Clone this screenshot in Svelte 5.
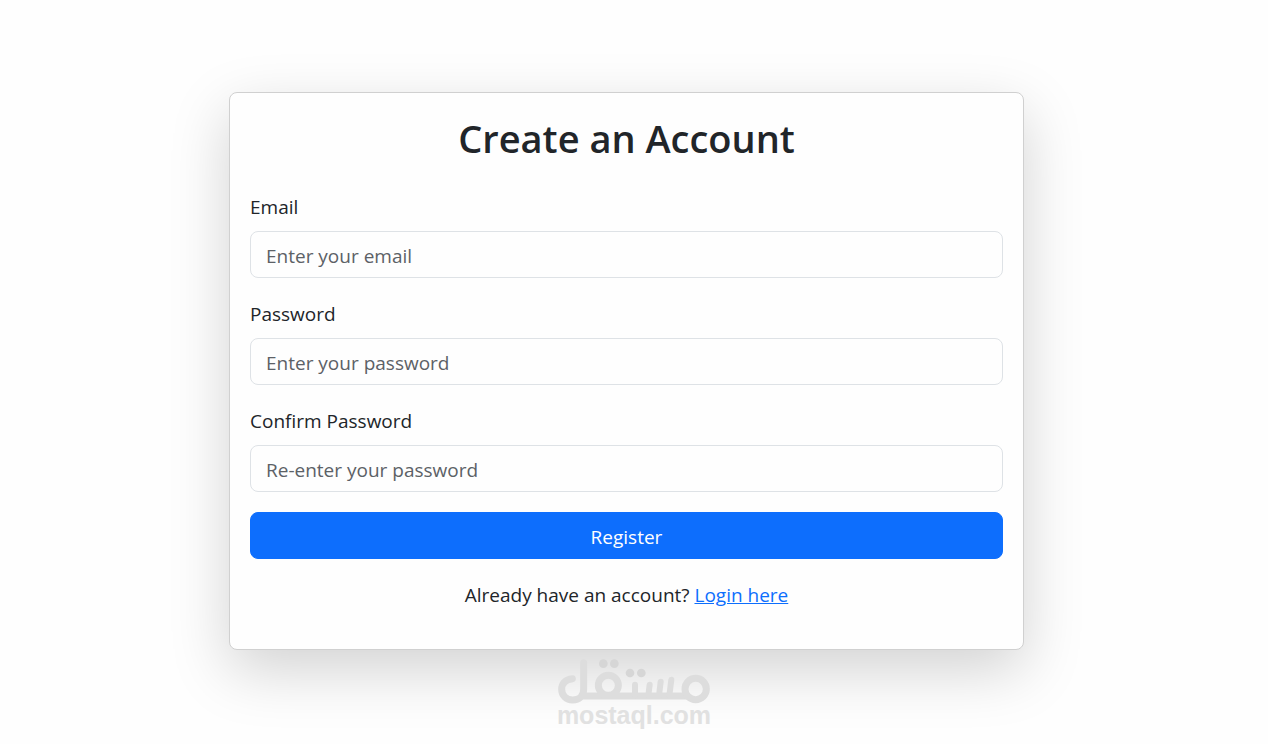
<script>
	let email = $state('');
	let password = $state('');
	let confirmPassword = $state('');

	function handleSubmit(event) {
		event.preventDefault();
	}
</script>

<div class="page">
	<main class="content">
		<div class="card">
			<h1>Create an Account</h1>

			<form onsubmit={handleSubmit}>
				<div class="form-group">
					<label for="email">Email</label>
					<input type="email" id="email" bind:value={email} placeholder="Enter your email" required />
				</div>

				<div class="form-group">
					<label for="password">Password</label>
					<input
						type="password"
						id="password"
						bind:value={password}
						placeholder="Enter your password"
						required
					/>
				</div>

				<div class="form-group">
					<label for="confirmPassword">Confirm Password</label>
					<input
						type="password"
						id="confirmPassword"
						bind:value={confirmPassword}
						placeholder="Re-enter your password"
						required
					/>
				</div>

				<button type="submit" class="btn-primary">Register</button>
			</form>

			<p class="login">Already have an account? <a href="#login">Login here</a></p>
		</div>
	</main>

	<footer class="brand">
		<svg width="152" height="45" viewBox="54 56 456 135" role="img" aria-label="mostaql">
			<g fill="none" stroke="currentColor" stroke-linecap="round" stroke-linejoin="round">
				<path
					stroke-width="21"
					d="M97 115 C76 117 65 130 65 147 C65 166 79 179 98 179 C118 179 131 166 131 146 V67 M131 167 H440"
				/>
				<circle cx="205" cy="135" r="30" stroke-width="21" />
				<circle cx="467" cy="146" r="32" stroke-width="21" />
				<path stroke-width="18" d="M285 133 V166 M329 133 L325 166 M362 124 L357 166 M394 118 L388 166" />
			</g>
			<g class="dots" fill="currentColor">
				<circle cx="190" cy="70" r="13" />
				<circle cx="223" cy="70" r="13" />
				<circle cx="270" cy="98" r="13" />
				<circle cx="304" cy="98" r="13" />
			</g>
		</svg>
		<span>mostaql.com</span>
	</footer>
</div>

<style>
	:global(body) {
		margin: 0;
		background: #fefefe;
	}

	.page {
		color: #212529;
		font-family: 'Segoe UI', 'Open Sans', 'Noto Sans', sans-serif;
		font-size: 19px;
		line-height: 32px;
	}

	.content {
		padding: 92px 15px 0 0;
	}

	.card {
		box-sizing: border-box;
		width: 100%;
		max-width: 795px;
		margin: 0 auto;
		padding: 20px;
		background: #fefefe;
		border: 1px solid #d0d0d0;
		border-radius: 8px;
		box-shadow: 0 20px 60px rgba(0, 0, 0, 0.175);
	}

	h1 {
		margin: 0 0 28px;
		font-size: 38px;
		font-weight: 600;
		line-height: 50px;
		text-align: center;
	}

	.form-group {
		margin-bottom: 20px;
	}

	label {
		display: block;
		margin-bottom: 8px;
	}

	input {
		box-sizing: border-box;
		display: block;
		width: 100%;
		height: 47px;
		padding: 8px 15px 6px;
		color: inherit;
		font: inherit;
		background: #fefefe;
		border: 1px solid #dee2e6;
		border-radius: 8px;
	}

	input::placeholder {
		color: #5c6166;
		opacity: 1;
	}

	.btn-primary {
		display: block;
		width: 100%;
		height: 47px;
		padding: 8px 15px 6px;
		color: #fff;
		font: inherit;
		background: #0d6efd;
		border: 1px solid #0d6efd;
		border-radius: 8px;
		cursor: pointer;
	}

	.login {
		margin: 20px 0 18px;
		text-align: center;
	}

	a {
		color: #0d6efd;
	}

	.brand {
		display: flex;
		flex-direction: column;
		align-items: center;
		padding: 9px 0 16px;
		color: #dddddd;
	}

	.brand svg {
		display: block;
	}

	.brand .dots {
		color: #d6d6d6;
	}

	.brand span {
		color: #e1e1e1;
		font: bold 25px/22px 'Liberation Sans', Arial, sans-serif;
	}
</style>
